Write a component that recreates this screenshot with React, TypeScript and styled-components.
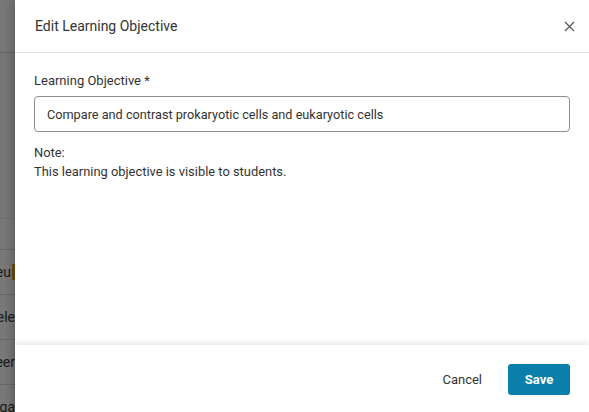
import React from 'react'
import styled, { createGlobalStyle } from 'styled-components'

const GlobalStyle = createGlobalStyle`
  html, body {
    margin: 0;
    padding: 0;
    height: 100%;
    overflow: hidden;
  }
  body {
    font-family: Roboto, 'Liberation Sans', Arial, sans-serif;
    color: #333;
    background: #fff;
  }
`

const rows = ['Identify the eu', 'Describe ele', 'Distinguish between career', 'Explain how orga']

const Page = styled.div`
  width: 589px;
  height: 412px;
  position: relative;
  overflow: hidden;
  background: #fff;
`

const TopBar = styled.div`
  height: 52px;
  border-bottom: 1px solid #d4d4d4;
`

const Spacer = styled.div`
  height: 165px;
  background: #fbfbfb;
`

const TableHead = styled.div`
  height: 30px;
  border-top: 1px solid #ececec;
  background: #fff;
`

const Row = styled.div`
  height: 44px;
  width: 15px;
  border-top: 1px solid #dcdcdc;
  display: flex;
  align-items: center;
  justify-content: flex-end;
  overflow: hidden;
  white-space: nowrap;
  font-size: 14px;
  color: #3a3a3a;
`

const RowText = styled.span`
  flex: none;
  display: flex;
  align-items: center;
`

const Mark = styled.span`
  display: inline-block;
  width: 3px;
  height: 16px;
  margin-left: 1px;
  background: #e8a21c;
`

const Backdrop = styled.div`
  position: absolute;
  inset: 0;
  background: rgba(0, 0, 0, 0.53);
`

const Drawer = styled.aside`
  position: absolute;
  top: 0;
  right: 0;
  bottom: 0;
  width: 574px;
  background: #fff;
  display: flex;
  flex-direction: column;
  box-shadow: -4px 0 8px rgba(0, 0, 0, 0.18);
`

const Header = styled.header`
  height: 52px;
  flex: none;
  display: flex;
  align-items: center;
  justify-content: space-between;
  padding: 0 14px 0 20px;
  border-bottom: 1px solid #e0e0e0;
`

const Title = styled.h2`
  margin: 0;
  font-size: 14px;
  font-weight: 400;
  color: #333;
`

const CloseButton = styled.button`
  border: none;
  background: none;
  padding: 0;
  width: 12px;
  height: 12px;
  display: flex;
  align-items: center;
  justify-content: center;
  cursor: pointer;
`

const Body = styled.div`
  flex: 1;
  padding: 20px 19px 0 19px;
`

const Label = styled.label`
  display: block;
  font-size: 13px;
  line-height: 16px;
  color: #333;
  margin-bottom: 7px;
`

const Input = styled.input`
  box-sizing: border-box;
  width: 100%;
  height: 36px;
  border: 1px solid #8e8e8e;
  border-radius: 4px;
  padding: 0 12px;
  font-family: inherit;
  font-size: 12.7px;
  color: #333;
  outline: none;
`

const Note = styled.p`
  margin: 11px 0 0;
  font-size: 12.9px;
  line-height: 19px;
  color: #333;
`

const Footer = styled.footer`
  height: 67px;
  flex: none;
  display: flex;
  align-items: center;
  justify-content: flex-end;
  gap: 14px;
  padding: 0 19px;
  box-shadow: 0 -3px 5px rgba(0, 0, 0, 0.08);
  position: relative;
`

const Button = styled.button<{ primary?: boolean }>`
  height: 31px;
  min-width: 62px;
  padding: 0 12px;
  margin-top: 2px;
  border: none;
  border-radius: 3px;
  font-family: inherit;
  font-size: 13px;
  font-weight: ${p => (p.primary ? 700 : 400)};
  color: ${p => (p.primary ? '#fff' : '#333')};
  background: ${p => (p.primary ? '#0a7fac' : 'transparent')};
  cursor: pointer;
`

export default function App() {
  return (
    <Page>
      <GlobalStyle />
      <TopBar />
      <Spacer />
      <TableHead />
      {rows.map((r, i) => (
        <Row key={r}>
          <RowText>
            {r}
            {i === 0 && <Mark />}
          </RowText>
        </Row>
      ))}
      <Backdrop />
      <Drawer>
        <Header>
          <Title>Edit Learning Objective</Title>
          <CloseButton aria-label="Close">
            <svg width="11" height="11" viewBox="0 0 11 11">
              <path d="M1 1 L10 10 M10 1 L1 10" stroke="#555" strokeWidth="1.2" fill="none" />
            </svg>
          </CloseButton>
        </Header>
        <Body>
          <Label>Learning Objective *</Label>
          <Input defaultValue="Compare and contrast prokaryotic cells and eukaryotic cells" />
          <Note>
            Note:
            <br />
            This learning objective is visible to students.
          </Note>
        </Body>
        <Footer>
          <Button>Cancel</Button>
          <Button primary>Save</Button>
        </Footer>
      </Drawer>
    </Page>
  )
}
